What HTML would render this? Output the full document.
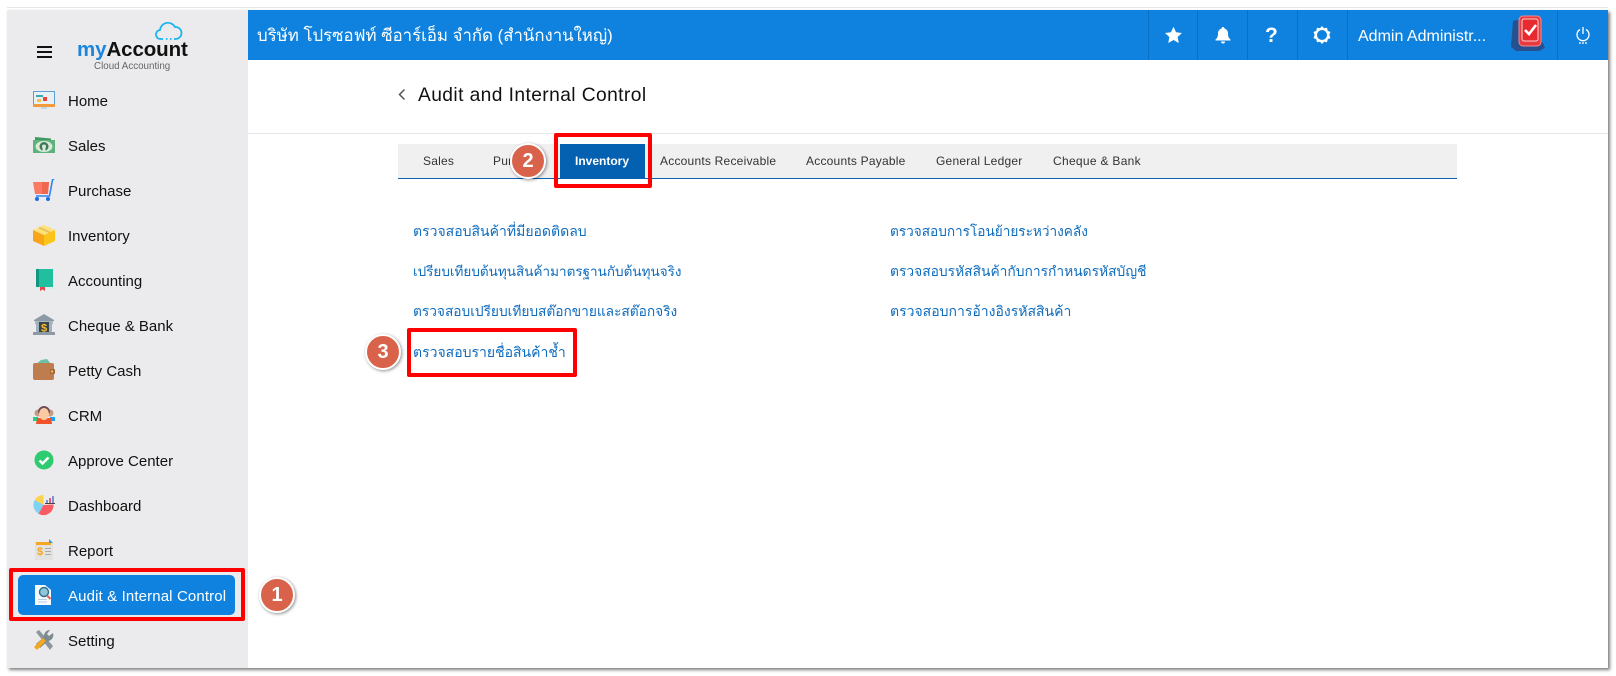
<!DOCTYPE html>
<html><head><meta charset="utf-8">
<style>
html,body{margin:0;padding:0;background:#fff;width:1616px;height:676px;overflow:hidden}
body{font-family:"Liberation Sans","Noto Sans CJK SC",sans-serif;position:relative}
.a{position:absolute;white-space:nowrap}
.nav{position:absolute;left:68px;font-size:15px;color:#111;line-height:20px;white-space:nowrap;margin-top:2px}
.ic{position:absolute;left:33px;width:22px;height:22px}
.tab{position:absolute;top:144px;line-height:34px;font-size:12px;color:#333;letter-spacing:.22px;white-space:nowrap}
.lnk{position:absolute;font-size:14px;line-height:24px;color:#0f6cbd;white-space:nowrap;margin-top:1px}
.sep{position:absolute;top:10px;width:1px;height:50px;background:#0a6fc2}
.red{position:absolute;border:4px solid #f00;border-radius:2px;box-sizing:border-box}
.num{position:absolute;width:32px;height:32px;border-radius:50%;background:#d9634a;border:2px solid #fff;box-shadow:1px 1px 3px rgba(0,0,0,.45);color:#fff;font-weight:bold;font-size:20px;line-height:32px;text-align:center}
</style></head><body>
<div class="a" style="left:7px;top:7px;width:1601px;height:1px;background:#e6e6e6"></div>
<div class="a" style="left:7px;top:10px;width:1601px;height:658px;background:#fff;box-shadow:2px 2px 3px rgba(0,0,0,.5)"></div>
<div class="a" style="left:7px;top:10px;width:241px;height:658px;background:#ebebed"></div>
<div class="a" style="left:248px;top:10px;width:1360px;height:50px;background:#0f82df"></div>

<div class="a" style="left:37px;top:46px;width:15px;height:2px;background:#111"></div>
<div class="a" style="left:37px;top:51px;width:15px;height:2px;background:#111"></div>
<div class="a" style="left:37px;top:56px;width:15px;height:2px;background:#111"></div>

<svg class="a" style="left:154px;top:21px" width="30" height="20" viewBox="0 0 30 20"><path d="M9 18H7a4.500 4.500 0 0 1-1-9 8 8 0 0 1 15-3 6 6 0 0 1 1 12h-2M12 18h1.500M16 18h1.500" fill="none" stroke="#19b4f0" stroke-width="1.700"/></svg>
<div class="a" style="left:77px;top:37px;font-size:20.500px;line-height:26px;font-weight:bold;letter-spacing:-.1px;color:#111"><span style="color:#1c86dc">my</span>Account</div>
<div class="a" style="left:94px;top:60px;font-size:9.800px;line-height:13px;color:#666">Cloud Accounting</div>

<div class="nav" style="top:90px">Home</div>
<div class="nav" style="top:135px">Sales</div>
<div class="nav" style="top:180px">Purchase</div>
<div class="nav" style="top:225px">Inventory</div>
<div class="nav" style="top:270px">Accounting</div>
<div class="nav" style="top:315px">Cheque &amp; Bank</div>
<div class="nav" style="top:360px">Petty Cash</div>
<div class="nav" style="top:405px">CRM</div>
<div class="nav" style="top:450px">Approve Center</div>
<div class="nav" style="top:495px">Dashboard</div>
<div class="nav" style="top:540px">Report</div>
<div class="nav" style="top:630px">Setting</div>

<svg class="ic" style="top:90px" viewBox="0 0 22 22"><rect x="0" y="1" width="22" height="15" fill="#5a9fd6"/><rect x="1" y="2" width="20" height="12" fill="#e9f0f3"/><rect x="3" y="5" width="7" height="2" fill="#3ba9b5"/><rect x="10" y="7" width="4" height="4" fill="#e8453c"/><rect x="4" y="9" width="4" height="3" fill="#f2c14e"/><rect x="0" y="14" width="22" height="3" fill="#f49a3c"/><rect x="8" y="17" width="6" height="2" fill="#bcd9e8"/></svg>
<svg class="ic" style="top:134px" viewBox="0 0 22 22"><path d="M2 3l16 1.500V7H2z" fill="#3f9a62"/><rect x="0" y="6" width="22" height="13" fill="#5cb37c"/><ellipse cx="11" cy="12.500" rx="8.500" ry="5.500" fill="#dbe9d8"/><circle cx="11" cy="12.500" r="4.500" fill="#3d7a55"/><circle cx="11" cy="12.500" r="2" fill="#dbe9d8"/><rect x="9.500" y="14" width="3" height="3.500" fill="#dbe9d8"/></svg>
<svg class="ic" style="top:179px" viewBox="0 0 22 22"><path d="M0 3h16l-1 12H2z" fill="#fb7a63"/><path d="M9 3h7l-1 12H9z" fill="#f0664f"/><path d="M21 0l-1.500 1-3 16H3" fill="none" stroke="#2d86ee" stroke-width="1.600"/><circle cx="4" cy="20" r="2" fill="#1a6fe0"/><circle cx="15" cy="20" r="2" fill="#1a6fe0"/></svg>
<svg class="ic" style="top:224px" viewBox="0 0 22 22"><path d="M0 6l11 5v11L0 17z" fill="#faa41a"/><path d="M22 6l-11 5v11l11-5z" fill="#fcc419"/><path d="M0 6l11-5 11 5-11 5z" fill="#fde27a"/><path d="M6 3.500l11 5" stroke="#e9c15a" stroke-width="2"/></svg>
<svg class="ic" style="top:269px" viewBox="0 0 22 22"><path d="M3 2a2 2 0 0 1 2-2h15v18H3z" fill="#1fbf9f"/><rect x="3" y="0" width="3" height="18" fill="#14967e"/><rect x="3" y="18" width="17" height="2" fill="#d8efe9"/><path d="M7 18h5v4l-2.500-1.500L7 22z" fill="#e5484a"/></svg>
<svg class="ic" style="top:314px" viewBox="0 0 22 22"><path d="M11 0L1 6v1h20V6z" fill="#8b9aa4"/><rect x="2" y="7" width="18" height="3" fill="#a9b7bf"/><rect x="3" y="8" width="3" height="10" fill="#a3b2ba"/><rect x="16" y="8" width="3" height="10" fill="#a3b2ba"/><rect x="6" y="8" width="10" height="11" fill="#39444c"/><text x="11" y="17.500" font-size="11" font-weight="bold" fill="#f5bc2c" text-anchor="middle" font-family="Liberation Sans">$</text><rect x="0" y="18" width="22" height="3" fill="#8b9aa4"/></svg>
<svg class="ic" style="top:358px" viewBox="0 0 22 22"><path d="M3 6l5-4 6-1 4 5z" fill="#6dc0a8"/><rect x="0" y="5" width="21" height="17" rx="2" fill="#bf7c4f"/><rect x="17" y="11" width="5" height="5" rx="1" fill="#a3653c"/><circle cx="19" cy="13.500" r="1.200" fill="#e8c05a"/></svg>
<svg class="ic" style="top:404px" viewBox="0 0 22 22"><rect x="0" y="13" width="5" height="4" fill="#1fd18a"/><rect x="17" y="13" width="5" height="4" fill="#1aa3f0"/><circle cx="5" cy="9" r="3.500" fill="#c99a82"/><circle cx="17" cy="9" r="3.500" fill="#c99a82"/><path d="M3 20l1-6h14l1 6z" fill="#f0522a"/><path d="M5 8a6 6 0 0 1 12 0v1H5z" fill="#6d4c55"/><ellipse cx="11" cy="10" rx="5" ry="6" fill="#fbc9a2"/></svg>
<svg class="ic" style="top:450px" viewBox="0 0 22 22"><circle cx="11" cy="10" r="9.500" fill="#2ecb71"/><path d="M6.500 10.500l3 3 6-6" fill="none" stroke="#fff" stroke-width="2.400"/></svg>
<svg class="ic" style="top:494px" viewBox="0 0 22 22"><path d="M10.500 11V1a10 10 0 0 0-8.700 5z" fill="#fcd34d"/><path d="M10.500 11L1.800 6a10 10 0 0 0 3.700 13.700z" fill="#7ed2f2"/><path d="M10.500 11l10-.500a10 10 0 0 1-15 9.200z" fill="#fa5c62"/><rect x="13" y="6" width="2" height="3" fill="#7c93d4"/><rect x="16" y="4" width="2" height="5" fill="#e05a7b"/><rect x="19" y="2" width="2" height="7" fill="#7c93d4"/><rect x="12" y="9" width="10" height="1" fill="#444"/></svg>
<svg class="ic" style="top:539px" viewBox="0 0 22 22"><rect x="2" y="3" width="18" height="18" fill="#e2e2e0"/><rect x="3" y="3" width="15" height="3" fill="#f5a623"/><path d="M16 0l4 4h-4z" fill="#3a9ad9"/><text x="7" y="16" font-size="11" font-weight="bold" fill="#f5a623" text-anchor="middle" font-family="Liberation Sans">$</text><rect x="12" y="9" width="6" height="1" fill="#aaa"/><rect x="12" y="12" width="6" height="1" fill="#aaa"/><rect x="12" y="15" width="6" height="1" fill="#aaa"/></svg>

<div class="a" style="left:18px;top:575px;width:217px;height:40px;background:#0f82df;border-radius:5px"></div>
<svg class="ic" style="top:584px" viewBox="0 0 22 22"><path d="M2 1h10l6 5v15H2z" fill="#f5fafd"/><circle cx="11" cy="8" r="4.500" fill="#8fc6d9" stroke="#2d6f8f" stroke-width="1.400"/><path d="M14 11.500l3.500 3.500" stroke="#e8665a" stroke-width="2.200"/><rect x="5" y="15" width="9" height="1" fill="#bcd"/><rect x="5" y="17.500" width="9" height="1" fill="#bcd"/></svg>
<div class="nav" style="top:585px;color:#fff;letter-spacing:.13px">Audit &amp; Internal Control</div>

<svg class="ic" style="top:629px" viewBox="0 0 22 22"><path d="M3 3l3-2 14 16-3 4z" fill="#8b979c"/><path d="M20 4l-4 3-2-2 3-4a6 6 0 0 0-6 7L3 15l4 4 8-7a6 6 0 0 0 5-8z" fill="#7d8a90"/><path d="M1 18l9-9 3 3-9 9z" fill="#f5a81c"/></svg>

<div class="a" style="left:257px;top:24px;font-size:16.800px;line-height:24px;color:#fff">บริษัท โปรซอฟท์ ซีอาร์เอ็ม จำกัด (สำนักงานใหญ่)</div>
<div class="sep" style="left:1148px"></div><div class="sep" style="left:1197px"></div><div class="sep" style="left:1247px"></div><div class="sep" style="left:1297px"></div><div class="sep" style="left:1347px"></div><div class="sep" style="left:1557px"></div>
<svg class="a" style="left:1164px;top:26px" width="19" height="18" viewBox="0 0 24 24"><path d="M12 1l3.400 7.300 7.900 1-5.800 5.400 1.500 7.900L12 18.700l-7 3.900 1.500-7.900L.7 9.300l7.900-1z" fill="#fff"/></svg>
<svg class="a" style="left:1215px;top:26px" width="16" height="18" viewBox="0 0 16 18"><path d="M8 1a1.200 1.200 0 0 1 1.200 1.300A5 5 0 0 1 13 7.500c0 3 .8 4.700 2.500 6v1H.5v-1C2.200 12.200 3 10.500 3 7.500a5 5 0 0 1 3.800-5.200A1.200 1.200 0 0 1 8 1zM6 15.500h4a2 2 0 0 1-4 0z" fill="#fff"/></svg>
<div class="a" style="left:1265px;top:23px;font-size:21px;line-height:26px;font-weight:bold;color:#fff">?</div>
<svg class="a" style="left:1313px;top:26px" width="18" height="18" viewBox="0 0 18 18"><path d="M9 0l2 2.200 3-.5.700 3 2.800 1.300-1.200 3 1.200 3-2.800 1.300-.7 3-3-.5L9 18l-2-2.200-3 .5-.7-3L.5 12l1.200-3L.5 6l2.800-1.300.7-3 3 .5z" fill="#fff"/><circle cx="9" cy="9" r="5" fill="#0f82df"/></svg>
<div class="a" style="left:1358px;top:26px;font-size:16px;line-height:22px;color:#fff">Admin Administr...</div>
<svg class="a" style="left:1510px;top:15px" width="36" height="42" viewBox="0 0 36 42"><path d="M3 6l8-2 22 24 2 5-6 3H6L1 32z" fill="#27508f"/><rect x="9" y="1" width="22" height="30" rx="4" fill="#e93a3f" stroke="#f58a8d" stroke-width="1"/><rect x="12" y="4" width="16" height="22" rx="2" fill="#e62a30" stroke="#fff" stroke-width=".8"/><path d="M15 15l4 4 7-9" fill="none" stroke="#fff" stroke-width="2.600"/></svg>
<svg class="a" style="left:1574px;top:26px" width="18" height="20" viewBox="0 0 18 20"><path d="M6 3.500a6 6 0 1 0 6 0M9 1v7" fill="none" stroke="#fff" stroke-width="1.300"/><path d="M5 17h8" stroke="#fff" stroke-width="1.200" stroke-dasharray="2 1"/></svg>

<svg class="a" style="left:397px;top:88px" width="10" height="13" viewBox="0 0 10 13"><path d="M7.500 1.500L2.500 6.500l5 5" fill="none" stroke="#555" stroke-width="1.500"/></svg>
<div class="a" style="left:418px;top:84px;font-size:19.200px;line-height:24px;color:#111;letter-spacing:.42px">Audit and Internal Control</div>
<div class="a" style="left:248px;top:133px;width:1360px;height:1px;background:#e5e5e5"></div>

<div class="a" style="left:398px;top:144px;width:1059px;height:34px;background:#f0f0f0"></div>
<div class="a" style="left:398px;top:178px;width:1059px;height:1px;background:#0b62b0"></div>
<div class="tab" style="left:423px">Sales</div>
<div class="tab" style="left:493px">Purchase</div>
<div class="a" style="left:560px;top:144px;width:85px;height:35px;background:#0460b0"></div>
<div class="tab" style="left:575px;color:#fff;font-weight:bold;letter-spacing:0">Inventory</div>
<div class="tab" style="left:660px">Accounts Receivable</div>
<div class="tab" style="left:806px">Accounts Payable</div>
<div class="tab" style="left:936px">General Ledger</div>
<div class="tab" style="left:1053px;letter-spacing:.3px">Cheque &amp; Bank</div>

<div class="lnk" style="left:413px;top:218px">ตรวจสอบสินค้าที่มียอดติดลบ</div>
<div class="lnk" style="left:413px;top:259px;font-size:13.500px">เปรียบเทียบต้นทุนสินค้ามาตรฐานกับต้นทุนจริง</div>
<div class="lnk" style="left:413px;top:299px;font-size:13.700px">ตรวจสอบเปรียบเทียบสต๊อกขายและสต๊อกจริง</div>
<div class="lnk" style="left:413px;top:339px">ตรวจสอบรายชื่อสินค้าช้ำ</div>
<div class="lnk" style="left:890px;top:219px;font-size:13.600px">ตรวจสอบการโอนย้ายระหว่างคลัง</div>
<div class="lnk" style="left:890px;top:259px;font-size:13.800px">ตรวจสอบรหัสสินค้ากับการกำหนดรหัสบัญชี</div>
<div class="lnk" style="left:890px;top:298px">ตรวจสอบการอ้างอิงรหัสสินค้า</div>

<div class="red" style="left:9px;top:568px;width:236px;height:53px"></div>
<div class="red" style="left:554px;top:133px;width:98px;height:55px"></div>
<div class="red" style="left:407px;top:328px;width:170px;height:49px"></div>
<div class="num" style="left:259px;top:577px">1</div>
<div class="num" style="left:510px;top:143px">2</div>
<div class="num" style="left:365px;top:334px">3</div>
</body></html>
